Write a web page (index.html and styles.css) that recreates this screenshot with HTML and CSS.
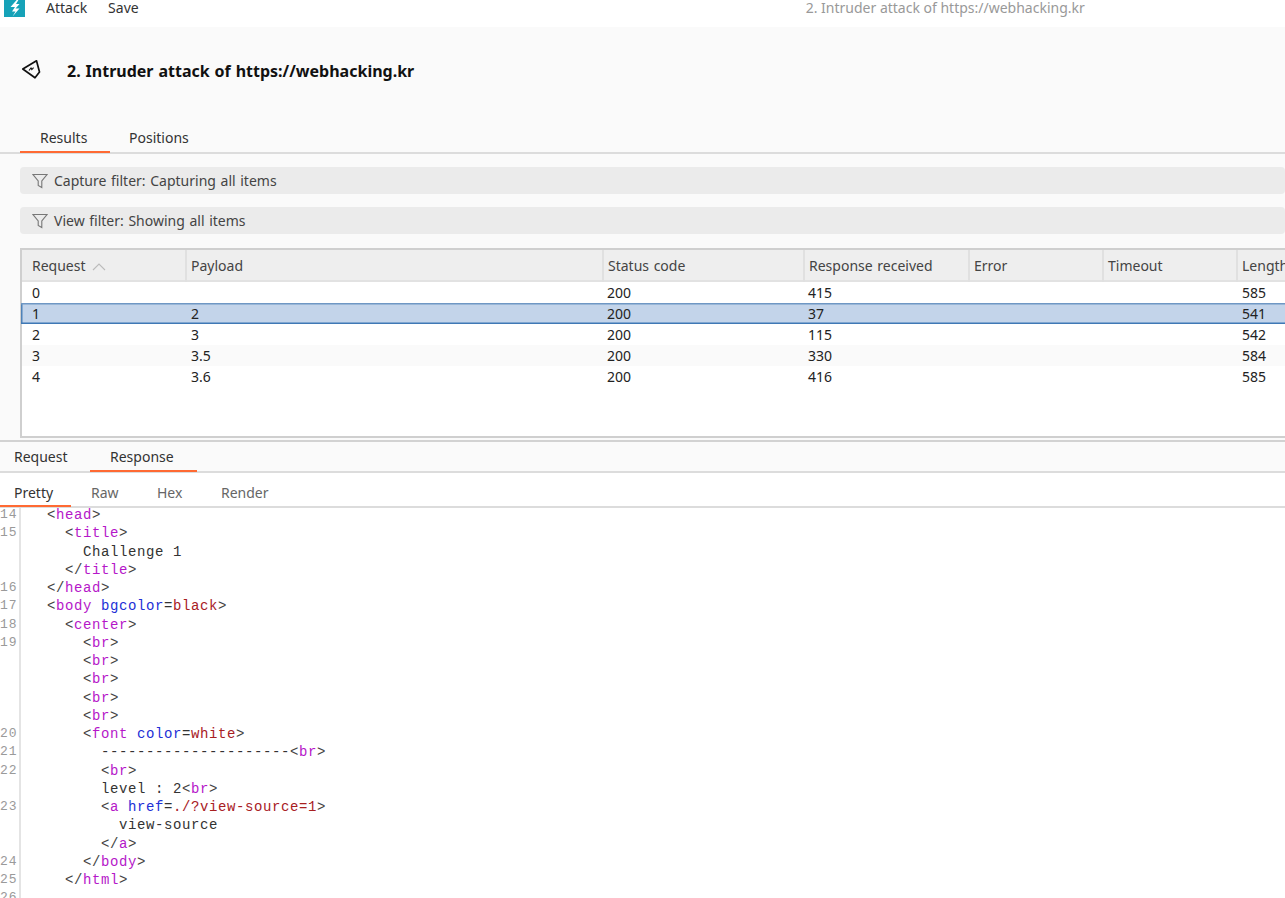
FILE: index.html
```html
<!DOCTYPE html>
<html lang="en">
<head>
<meta charset="utf-8">
<title>2. Intruder attack of https://webhacking.kr</title>
<link rel="stylesheet" href="styles.css">
</head>
<body>
<div class="page">
  <header class="topbar">
    <svg class="logo" viewBox="0 0 21 18" width="21" height="18"><rect width="21" height="18" fill="#16a2b8"/><path d="M13.5 0 6.5 8h4.5L8 12.5h3.5L8.5 17.5 15.5 9.5h-4L15.5 5h-3.5L15 0z" fill="#fff"/></svg>
    <nav class="menu"><span>Attack</span><span>Save</span></nav>
    <div class="wintitle">2. Intruder attack of https://webhacking.kr</div>
  </header>
  <section class="titlebar">
    <svg class="kite" viewBox="0 0 20 20" width="20" height="20"><path d="M1.8 10 15.5 1.8 18.5 13 14 18.8z" fill="none" stroke="#111" stroke-width="1.7" stroke-linejoin="round"/><path d="M8 11.5l2-2.5 .8 1.6 1.8-2" fill="none" stroke="#111" stroke-width="1.1"/></svg>
    <h1>2. Intruder attack of https://webhacking.kr</h1>
  </section>
  <div class="tabs main-tabs">
    <span class="tab on t-results">Results</span>
    <span class="tab t-positions">Positions</span>
  </div>
  <section class="filters">
    <div class="filter"><svg class="funnel" viewBox="0 0 16 16" width="16" height="16"><path d="M1 1.5h14L9.8 8v6.5L6.2 12.5V8z" fill="none" stroke="#777" stroke-width="1.1"/></svg><span>Capture filter: Capturing all items</span></div>
    <div class="filter"><svg class="funnel" viewBox="0 0 16 16" width="16" height="16"><path d="M1 1.5h14L9.8 8v6.5L6.2 12.5V8z" fill="none" stroke="#777" stroke-width="1.1"/></svg><span>View filter: Showing all items</span></div>
  </section>
  <section class="results">
    <div class="row head">
      <div class="c req">Request <svg class="sort" viewBox="0 0 14 8" width="14" height="8"><path d="M1 7 7 1l6 6" fill="none" stroke="#bbb" stroke-width="1.1"/></svg></div><div class="c">Payload</div><div class="c">Status code</div><div class="c">Response received</div><div class="c">Error</div><div class="c">Timeout</div><div class="c">Length</div>
    </div>
    <div class="row"><div class="c req">0</div><div class="c"></div><div class="c">200</div><div class="c">415</div><div class="c"></div><div class="c"></div><div class="c">585</div></div>
    <div class="row sel"><div class="c req">1</div><div class="c">2</div><div class="c">200</div><div class="c">37</div><div class="c"></div><div class="c"></div><div class="c">541</div></div>
    <div class="row"><div class="c req">2</div><div class="c">3</div><div class="c">200</div><div class="c">115</div><div class="c"></div><div class="c"></div><div class="c">542</div></div>
    <div class="row alt"><div class="c req">3</div><div class="c">3.5</div><div class="c">200</div><div class="c">330</div><div class="c"></div><div class="c"></div><div class="c">584</div></div>
    <div class="row"><div class="c req">4</div><div class="c">3.6</div><div class="c">200</div><div class="c">416</div><div class="c"></div><div class="c"></div><div class="c">585</div></div>
  </section>
  <div class="tabs rr-tabs">
    <span class="tab t-request">Request</span>
    <span class="tab on t-response">Response</span>
  </div>
  <div class="tabs view-tabs">
    <span class="tab on t-pretty">Pretty</span>
    <span class="tab dim t-raw">Raw</span>
    <span class="tab dim t-hex">Hex</span>
    <span class="tab dim t-render">Render</span>
  </div>
  <section class="code">
    <div class="ln"><i>14</i><code class="l1"><b>&lt;</b><u>head</u><b>&gt;</b></code></div>
    <div class="ln"><i>15</i><code class="l2"><b>&lt;</b><u>title</u><b>&gt;</b></code></div>
    <div class="ln"><i></i><code class="l3">Challenge 1</code></div>
    <div class="ln"><i></i><code class="l2"><b>&lt;/</b><u>title</u><b>&gt;</b></code></div>
    <div class="ln"><i>16</i><code class="l1"><b>&lt;/</b><u>head</u><b>&gt;</b></code></div>
    <div class="ln"><i>17</i><code class="l1"><b>&lt;</b><u>body</u> <em>bgcolor</em>=<s>black</s><b>&gt;</b></code></div>
    <div class="ln"><i>18</i><code class="l2"><b>&lt;</b><u>center</u><b>&gt;</b></code></div>
    <div class="ln"><i>19</i><code class="l3"><b>&lt;</b><u>br</u><b>&gt;</b></code></div>
    <div class="ln"><i></i><code class="l3"><b>&lt;</b><u>br</u><b>&gt;</b></code></div>
    <div class="ln"><i></i><code class="l3"><b>&lt;</b><u>br</u><b>&gt;</b></code></div>
    <div class="ln"><i></i><code class="l3"><b>&lt;</b><u>br</u><b>&gt;</b></code></div>
    <div class="ln"><i></i><code class="l3"><b>&lt;</b><u>br</u><b>&gt;</b></code></div>
    <div class="ln"><i>20</i><code class="l3"><b>&lt;</b><u>font</u> <em>color</em>=<s>white</s><b>&gt;</b></code></div>
    <div class="ln"><i>21</i><code class="l4">---------------------<b>&lt;</b><u>br</u><b>&gt;</b></code></div>
    <div class="ln"><i>22</i><code class="l4"><b>&lt;</b><u>br</u><b>&gt;</b></code></div>
    <div class="ln"><i></i><code class="l4">level : 2<b>&lt;</b><u>br</u><b>&gt;</b></code></div>
    <div class="ln"><i>23</i><code class="l4"><b>&lt;</b><u>a</u> <em>href</em>=<s>./?view-source=1</s><b>&gt;</b></code></div>
    <div class="ln"><i></i><code class="l5">view-source</code></div>
    <div class="ln"><i></i><code class="l4"><b>&lt;/</b><u>a</u><b>&gt;</b></code></div>
    <div class="ln"><i>24</i><code class="l3"><b>&lt;/</b><u>body</u><b>&gt;</b></code></div>
    <div class="ln"><i>25</i><code class="l2"><b>&lt;/</b><u>html</u><b>&gt;</b></code></div>
    <div class="ln"><i>26</i><code class="l1"></code></div>
  </section>
</div>
</body>
</html>
```
FILE: styles.css
```css
* { box-sizing: border-box; }
html, body { margin: 0; padding: 0; }
body { overflow: hidden; background: #fff; }
.page {
  width: 1285px;
  height: 898px;
  overflow: hidden;
  font-family: "Noto Sans", "Open Sans", sans-serif;
  font-size: 14px;
  color: #222;
  background: #fafafa;
  display: flex;
  flex-direction: column;
}
.topbar {
  height: 27px;
  flex: none;
  background: #fff;
  display: flex;
  align-items: flex-start;
  padding-left: 4px;
}
.logo { flex: none; margin-top: -1px; }
.menu { display: flex; gap: 21px; margin-left: 21px; line-height: 16px; color: #333; }
.wintitle { margin-left: 667px; line-height: 16px; color: #999; white-space: nowrap; }
.titlebar {
  height: 84px;
  flex: none;
  display: flex;
  align-items: flex-start;
  padding: 32px 0 0 21px;
}
.kite { flex: none; }
.titlebar h1 {
  margin: 0 0 0 26px;
  font-size: 16px;
  font-weight: 700;
  line-height: 24px;
  color: #111;
  white-space: nowrap;
  word-spacing: 0.75px;
}
.tabs {
  display: flex;
  flex: none;
  border-bottom: 2px solid #dcdcdc;
}
.tab {
  display: block;
  border-bottom: 2px solid transparent;
  margin-bottom: -1px;
  color: #333;
}
.tab.on { border-bottom-color: #ff6a33; }
.tab.dim { color: #666; }
.main-tabs { padding: 17px 0 0 20px; height: 43px; margin-bottom: 13px; }
.main-tabs .tab { height: 25px; line-height: 20px; }
.t-results { width: 90px; padding-left: 20px; }
.t-positions { width: 100px; padding-left: 19px; }
.filters { display: flex; flex-direction: column; gap: 13px; padding-left: 20px; flex: none; }
.filter {
  height: 27px;
  background: #ebebeb;
  border-radius: 4px;
  display: flex;
  align-items: center;
  padding-left: 12px;
  gap: 6px;
  color: #444;
  word-spacing: 1px;
}
.funnel { flex: none; }
.results {
  margin: 14px 0 0 20px;
  height: 190px;
  flex: none;
  background: #fff;
  border: 2px solid #cfcfcf;
  border-right: 0;
  width: 1400px;
}
.row {
  display: grid;
  grid-template-columns: 163px 417px 201px 165px 134px 134px 134px;
  height: 21px;
  align-items: center;
  line-height: 21px;
}
.row.head {
  height: 32px;
  background: #eeeeee;
  border-bottom: 2px solid #e2e2e2;
  line-height: 32px;
  color: #444;
  align-items: stretch;
}
.c { padding-left: 5px; white-space: nowrap; }
.c:nth-child(2), .c:last-child { padding-left: 6px; }
.head .c { border-left: 2px solid #e0e0e0; padding-left: 4px; word-spacing: 1px; }
.c.req, .head .c.req { border-left: 0; padding-left: 10px; }
.sort { margin-left: 2px; }
.row.alt { background: #fafafa; }
.row.sel {
  margin-left: -1px;
  padding-left: 1px;
  background: #c3d4ea;
  box-shadow: inset 0 1.5px 0 #6f97c4, inset 0 -1.5px 0 #3f78b5, inset 1.5px 0 0 #4f82b8;
}
.rr-tabs { margin-top: 2px; height: 33px; border-top: 2px solid #d2d2d2; }
.rr-tabs .tab { height: 30px; line-height: 30px; }
.t-request { width: 81px; padding-left: 14px; }
.t-response { width: 107px; margin-left: 9px; padding-left: 20px; }
.view-tabs { height: 35px; background: #fff; }
.view-tabs .tab { height: 34px; line-height: 40px; }
.t-pretty { width: 71px; padding-left: 14px; }
.t-raw { width: 66px; padding-left: 20px; }
.t-hex { width: 64px; padding-left: 20px; }
.t-render { width: 84px; padding-left: 20px; }
.code { background: #fff; flex: 1; min-height: 0; font-family: "Liberation Mono", monospace; font-size: 14px; }
.ln { display: flex; height: 18.25px; line-height: 14px; white-space: pre; }
.ln i {
  flex: none;
  width: 21px;
  height: 100%;
  font-style: normal;
  font-size: 13px;
  letter-spacing: 1px;
  color: #9a9a9a;
  border-right: 2px solid #e4e4e4;
  text-align: right;
  padding-right: 5px;
}
.ln code { font-family: inherit; font-size: 14px; letter-spacing: 0.6px; color: #333; }
.l1 { padding-left: 26px; }
.l2 { padding-left: 44px; }
.l3 { padding-left: 62px; }
.l4 { padding-left: 80px; }
.l5 { padding-left: 98px; }
.ln b { font-weight: 400; color: #444; }
.ln u { text-decoration: none; color: #b517c9; }
.ln em { font-style: normal; color: #2230d6; }
.ln s { text-decoration: none; color: #a8201f; }
```
